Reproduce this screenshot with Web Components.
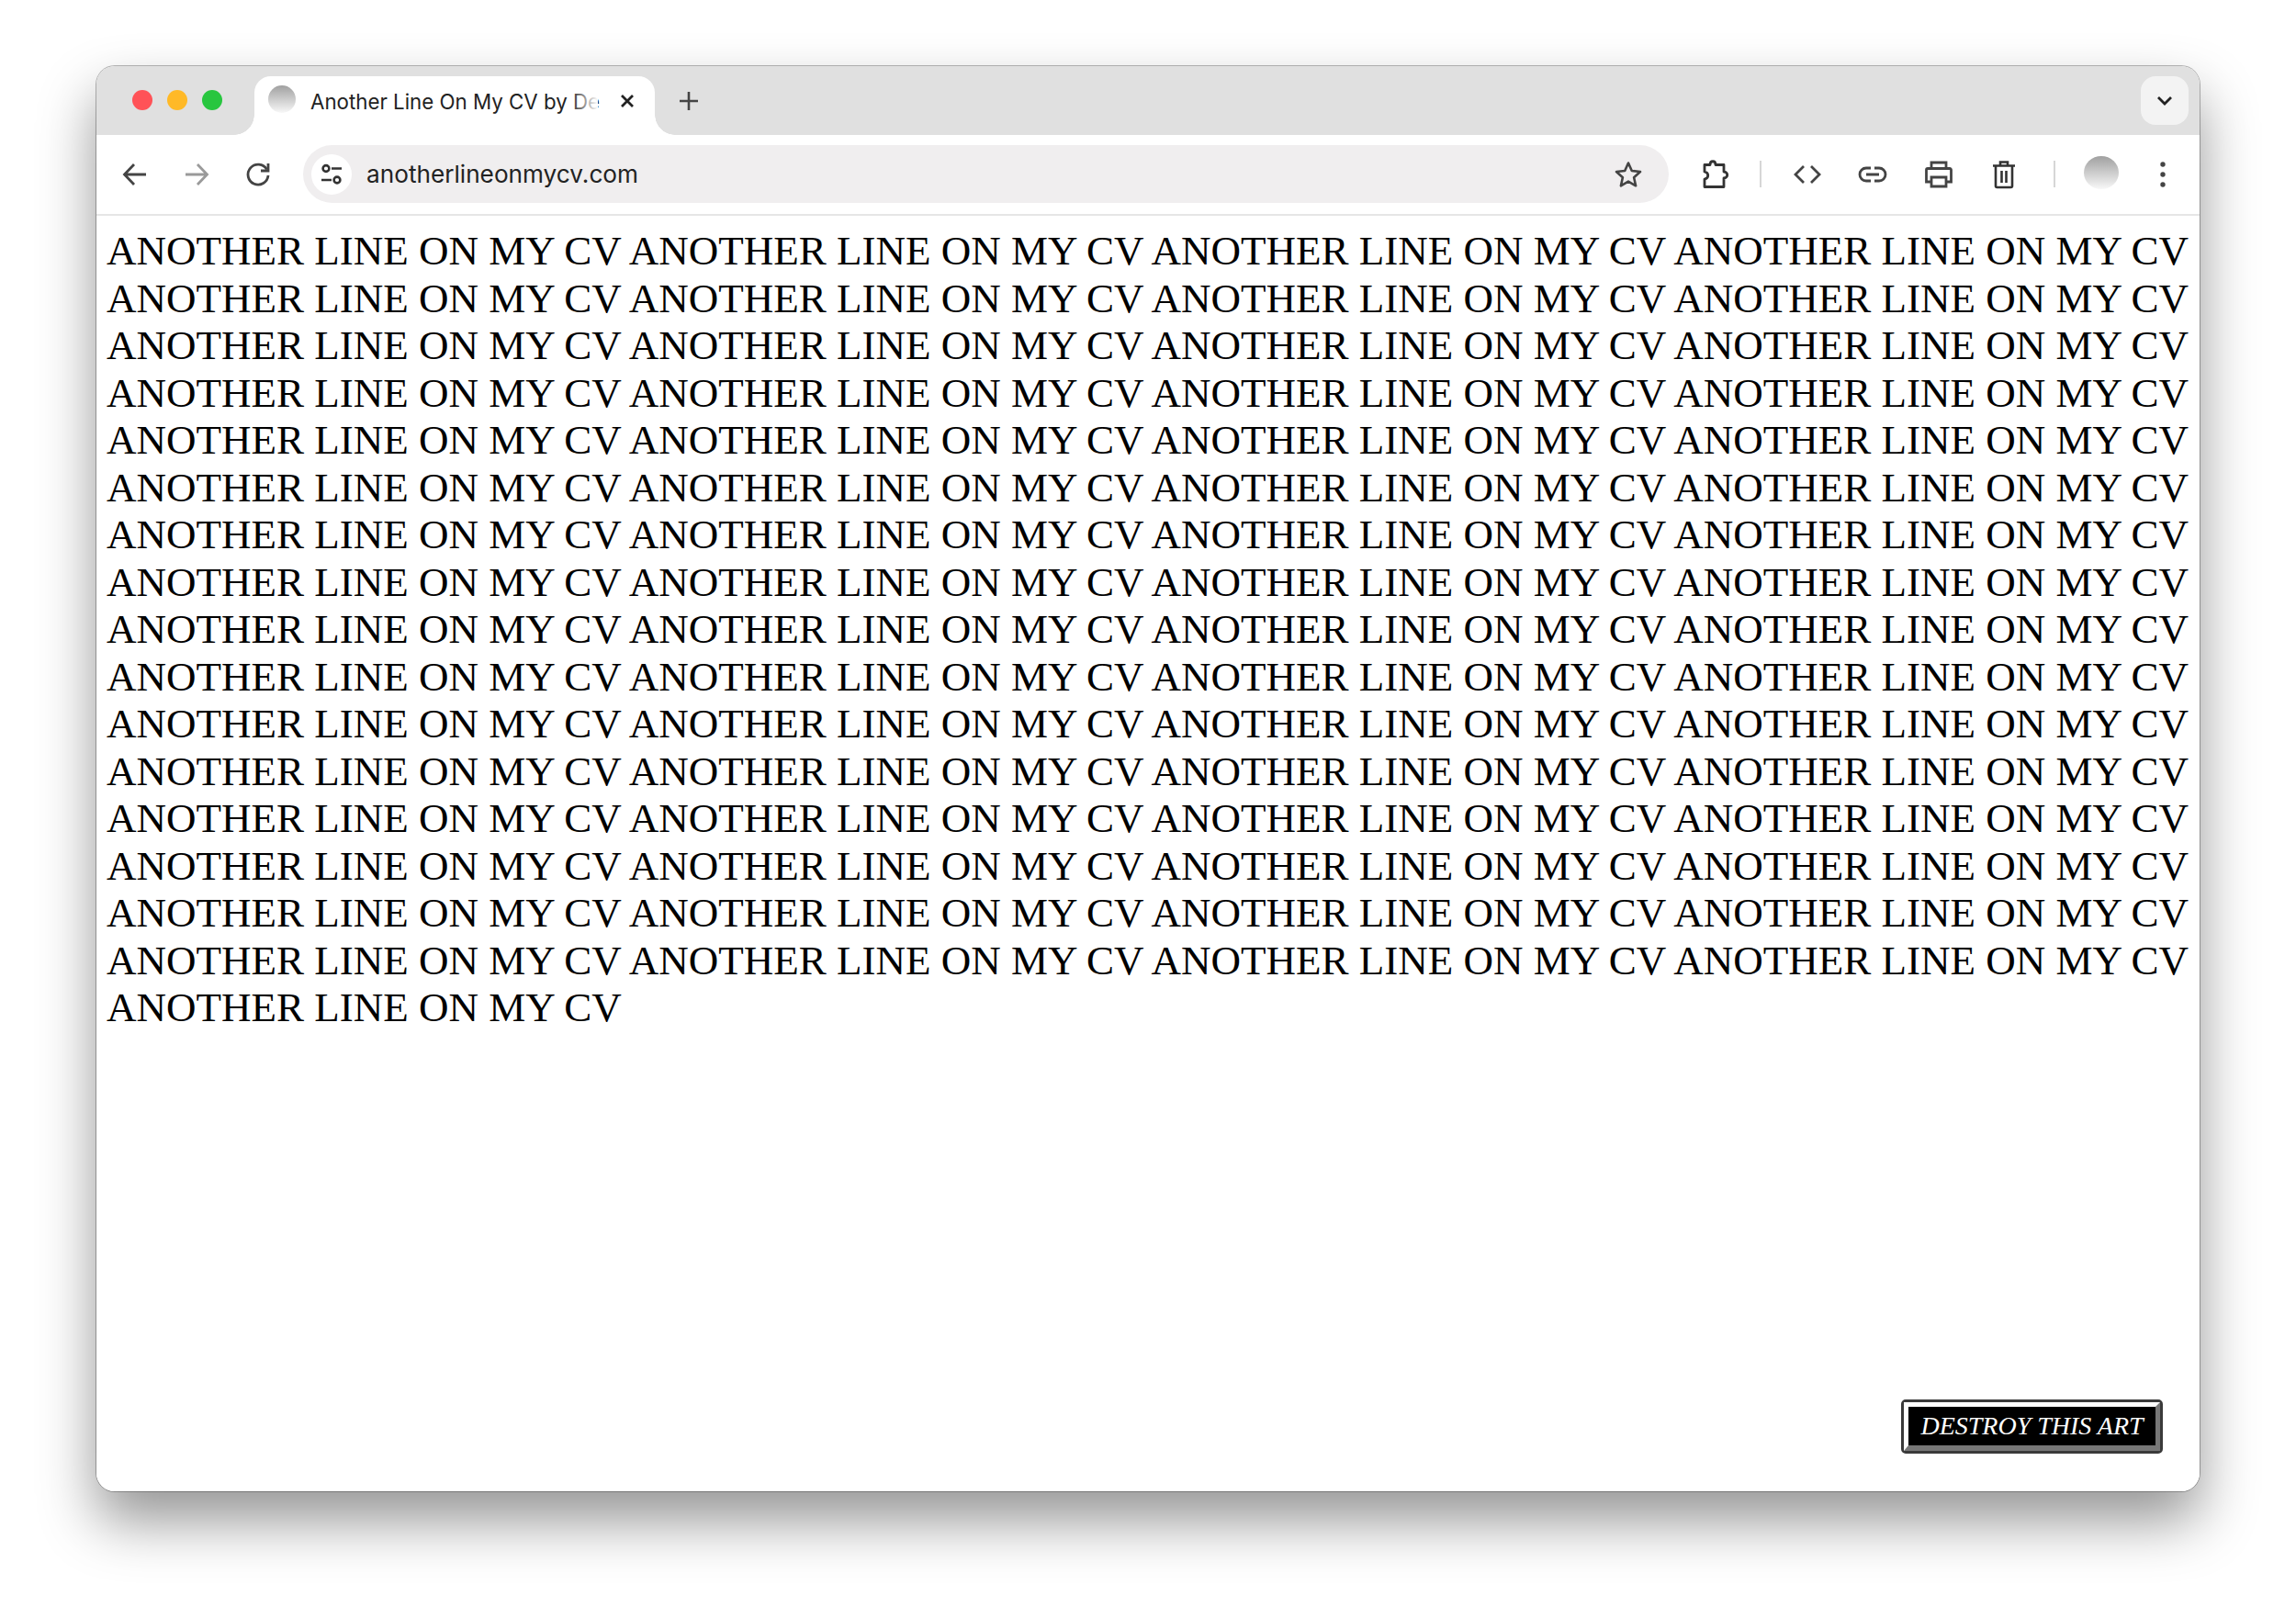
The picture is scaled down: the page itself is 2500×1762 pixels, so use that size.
<!DOCTYPE html>
<html lang="en">
<head>
<meta charset="utf-8">
<title>Another Line On My CV</title>
<style>
  html, body { margin: 0; background: #fff; }
  body { height: 1762px; overflow: hidden; font-family: "Inter", "Liberation Sans", sans-serif; }
</style>
</head>
<body>
<browser-window>
  <tab-strip title-text="Another Line On My CV by De"></tab-strip>
  <browser-toolbar url="anotherlineonmycv.com"></browser-toolbar>
  <art-page phrase="ANOTHER LINE ON MY CV" count="65"></art-page>
</browser-window>

<script>
class BrowserWindow extends HTMLElement {
  constructor() {
    super();
    this.attachShadow({ mode: "open" });
    this.shadowRoot.innerHTML = `
      <style>
        :host {
          display: flex;
          flex-direction: column;
          box-sizing: border-box;
          width: 2290px;
          height: 1552px;
          margin: 72px 0 0 105px;
          border-radius: 20px;
          background: #fff;
          box-shadow: 0 0 0 1px rgba(0, 0, 0, 0.28), 0 32px 62px rgba(0, 0, 0, 0.42);
          overflow: hidden;
        }
      </style>
      <slot></slot>
    `;
  }
}

class TabStrip extends HTMLElement {
  constructor() {
    super();
    this.attachShadow({ mode: "open" });
  }

  connectedCallback() {
    const title = this.getAttribute("title-text");
    this.shadowRoot.innerHTML = `
      <style>
        :host {
          display: flex;
          align-items: flex-start;
          box-sizing: border-box;
          height: 75px;
          padding: 11px 12px 0 39px;
          background: #e0e0e0;
          flex: none;
        }
        .dots { display: flex; gap: 16px; padding-top: 15px; }
        .dot { width: 22px; height: 22px; border-radius: 50%; }
        .red { background: #ff5257; }
        .amber { background: #ffb927; }
        .green { background: #28c63f; }
        .tab {
          position: relative;
          display: flex;
          align-items: center;
          box-sizing: border-box;
          width: 436px;
          height: 64px;
          margin-left: 35px;
          padding: 0 19px 10px 15px;
          background: #fff;
          border-radius: 18px 18px 0 0;
        }
        .tab::before, .tab::after {
          content: "";
          position: absolute;
          bottom: 0;
          width: 22px;
          height: 22px;
        }
        .tab::before { left: -22px; background: radial-gradient(circle at 0 0, #e0e0e0 21.5px, #fff 22px); }
        .tab::after { right: -22px; background: radial-gradient(circle at 100% 0, #e0e0e0 21.5px, #fff 22px); }
        .favicon {
          width: 30px;
          height: 30px;
          margin-top: -4px;
          border-radius: 50%;
          background: linear-gradient(#a0a0a0, #f8f8f8);
          flex: none;
        }
        .title {
          position: relative;
          width: 313px;
          margin-left: 16px;
          font-size: 22.3px;
          color: #222;
          white-space: nowrap;
        }
        .title::after {
          content: "";
          position: absolute;
          top: 0;
          right: 0;
          bottom: 0;
          width: 30px;
          background: linear-gradient(90deg, rgba(255, 255, 255, 0), #fff);
        }
        .close { flex: none; margin-left: 21px; }
        .plus { margin: 15px 0 0 25px; }
        .more {
          display: flex;
          align-items: center;
          justify-content: center;
          width: 52px;
          height: 53px;
          margin-left: auto;
          border-radius: 16px;
          background: #f3f3f3;
        }
        svg { display: block; }
      </style>
      <div class="dots">
        <div class="dot red"></div>
        <div class="dot amber"></div>
        <div class="dot green"></div>
      </div>
      <div class="tab">
        <div class="favicon"></div>
        <div class="title">${title}</div>
        <svg class="close" width="22" height="22" viewBox="0 0 22 22" fill="none" stroke="#222" stroke-width="2.8"><path d="M5 5l12 12M17 5L5 17"/></svg>
      </div>
      <svg class="plus" width="24" height="24" viewBox="0 0 24 24" fill="none" stroke="#444" stroke-width="2.6"><path d="M12 2v20M2 12h20"/></svg>
      <div class="more">
        <svg width="20" height="14" viewBox="0 0 20 14" fill="none" stroke="#222" stroke-width="2.8"><path d="M3 3l7 7 7-7"/></svg>
      </div>
    `;
  }
}

class BrowserToolbar extends HTMLElement {
  constructor() {
    super();
    this.attachShadow({ mode: "open" });
  }

  connectedCallback() {
    const url = this.getAttribute("url");
    this.shadowRoot.innerHTML = `
      <style>
        :host {
          display: flex;
          align-items: center;
          box-sizing: border-box;
          height: 88px;
          padding: 0 0 1px 27px;
          border-bottom: 2px solid #e6e6e6;
          border-radius: 18px 18px 0 0;
          background: #fff;
          flex: none;
        }
        svg { display: block; flex: none; }
        .nav { display: flex; gap: 37px; }
        .bar {
          display: flex;
          align-items: center;
          box-sizing: border-box;
          width: 1487px;
          height: 63px;
          margin-left: 34px;
          padding: 0 28px 0 9px;
          border-radius: 32px;
          background: #f0eeef;
        }
        .site {
          display: flex;
          align-items: center;
          justify-content: center;
          width: 44px;
          height: 44px;
          border-radius: 50%;
          background: #fff;
        }
        .url {
          margin-left: 16px;
          font-size: 26.2px;
          color: #222;
        }
        .star { margin-left: auto; }
        .tools { display: flex; align-items: center; margin-left: 35px; }
        .sep { width: 2px; height: 29px; background: #d6d6d6; }
        .avatar {
          width: 38px;
          height: 36px;
          margin: -4px 0 0 31px;
          border-radius: 50%;
          background: linear-gradient(#a0a0a0, #f8f8f8);
        }
      </style>
      <div class="nav">
        <svg width="30" height="30" viewBox="0 0 30 30" fill="none" stroke="#444" stroke-width="2.8"><path d="M27 15H4M14 4L3.500 15 14 26"/></svg>
        <svg width="30" height="30" viewBox="0 0 30 30" fill="none" stroke="#9a9a9a" stroke-width="2.8"><path d="M3 15h23M16 4l10.500 11L16 26"/></svg>
        <svg width="30" height="30" viewBox="0 0 30 30" fill="none" stroke="#444" stroke-width="2.8"><path d="M24.500 9.500A11 11 0 1 0 26 16"/><path d="M26 3v8h-8" /></svg>
      </div>
      <div class="bar">
        <div class="site">
          <svg width="26" height="26" viewBox="0 0 26 26" fill="none" stroke="#333" stroke-width="2.6"><circle cx="7" cy="6.500" r="3.400"/><path d="M13 6.500h11M2 19h11"/><circle cx="19" cy="19" r="3.400"/></svg>
        </div>
        <span class="url">${url}</span>
        <svg class="star" width="32" height="32" viewBox="0 0 32 32" fill="none" stroke="#444" stroke-width="2.600" stroke-linejoin="round"><path d="M16 3.500l3.800 8.500 9.200 1-6.900 6.200 2 9.100L16 23.600l-8.100 4.700 2-9.100L3 13l9.200-1z"/></svg>
      </div>
      <div class="tools">
        <svg width="32" height="36" viewBox="0 0 32 36" fill="none" stroke="#333" stroke-width="2.8" stroke-linejoin="round"><path d="M4 7.500h6c0-5 6-5 6 0h9V15c5 0 5 7 0 7v9.500H4V23c5-1 5-7 0-8z"/></svg>
        <div class="sep" style="margin-left:32px"></div>
        <svg style="margin-left:34px" width="32" height="24" viewBox="0 0 32 24" fill="none" stroke="#444" stroke-width="2.8"><path d="M12 3L3 12l9 9M20 3l9 9-9 9"/></svg>
        <svg style="margin-left:39px" width="32" height="20" viewBox="0 0 32 20" fill="none" stroke="#444" stroke-width="2.8"><path d="M14 3H9a7 7 0 0 0 0 14h5M18 3h5a7 7 0 0 1 0 14h-5M9 10h14"/></svg>
        <svg style="margin-left:40px" width="32" height="32" viewBox="0 0 32 32" fill="none" stroke="#444" stroke-width="2.8"><path d="M8 10V3h16v7M8 24H2.500V11a1.500 1.500 0 0 1 1.500-1.500h24a1.500 1.500 0 0 1 1.500 1.500v13H24M8 19h16v10H8z"/></svg>
        <svg style="margin-left:41px" width="28" height="32" viewBox="0 0 28 32" fill="none" stroke="#333" stroke-width="2.6"><path d="M2 6.500h24M10 6V2.500h8V6M5 7v21.500a1.500 1.500 0 0 0 1.500 1.500h15a1.500 1.500 0 0 0 1.500-1.500V7M11.500 12v13M16.500 12v13" /></svg>
        <div class="sep" style="margin-left:40px"></div>
        <div class="avatar"></div>
        <svg style="margin-left:44px" width="8" height="30" viewBox="0 0 8 30" fill="#444"><circle cx="4" cy="4" r="2.700"/><circle cx="4" cy="15" r="2.700"/><circle cx="4" cy="26" r="2.700"/></svg>
      </div>
    `;
  }
}

class ArtPage extends HTMLElement {
  constructor() {
    super();
    this.attachShadow({ mode: "open" });
  }

  connectedCallback() {
    const phrase = this.getAttribute("phrase");
    const count = Number(this.getAttribute("count"));
    this.shadowRoot.innerHTML = `
      <style>
        :host {
          display: block;
          position: relative;
          flex: 1;
          box-sizing: border-box;
          padding: 13px 4px 0 11px;
          background: #fff;
          font-family: "Liberation Serif", serif;
          font-size: 45px;
          line-height: 51.5px;
          color: #000;
        }
        .text { margin: 0; }
      </style>
      <p class="text">${Array(count).fill(phrase).join(" ")}</p>
      <destroy-button>DESTROY THIS ART</destroy-button>
    `;
  }
}

class DestroyButton extends HTMLElement {
  constructor() {
    super();
    this.attachShadow({ mode: "open" });
    this.shadowRoot.innerHTML = `
      <style>
        :host {
          position: absolute;
          right: 40px;
          bottom: 41px;
          display: block;
          box-sizing: border-box;
          width: 285px;
          height: 59px;
          border: 3px solid #3a3a3a;
          border-radius: 5px;
          background: #000;
        }
        .inner {
          display: flex;
          align-items: center;
          justify-content: center;
          box-sizing: border-box;
          height: 100%;
          border-style: solid;
          border-width: 5px 5px 6px 5px;
          border-color: #fff #777 #777 #fff;
          font-family: "Liberation Serif", serif;
          font-style: italic;
          font-size: 28px;
          line-height: 1;
          color: #fff;
          white-space: nowrap;
        }
      </style>
      <div class="inner"><slot></slot></div>
    `;
  }
}

customElements.define("browser-window", BrowserWindow);
customElements.define("tab-strip", TabStrip);
customElements.define("browser-toolbar", BrowserToolbar);
customElements.define("art-page", ArtPage);
customElements.define("destroy-button", DestroyButton);
</script>
</body>
</html>
